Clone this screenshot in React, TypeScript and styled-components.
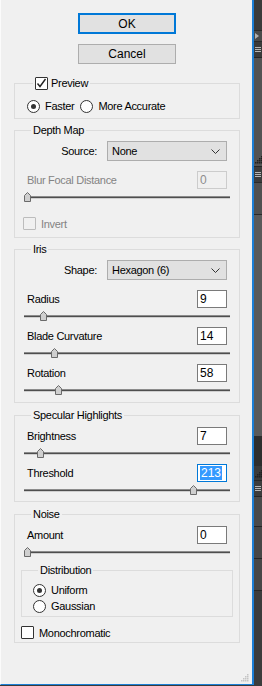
import React from 'react';
import styled, { createGlobalStyle } from 'styled-components';

const GlobalStyle = createGlobalStyle`
  html, body {
    margin: 0;
    padding: 0;
    background: #3a3a3a;
  }
  body {
    font-family: "Liberation Sans", Arial, sans-serif;
    font-size: 11px;
    letter-spacing: -0.3px;
    color: #000;
  }
`;

const Screen = styled.div`
  display: flex;
  width: 262px;
  height: 686px;
  overflow: hidden;
`;

const Panel = styled.div`
  width: 254px;
  height: 685px;
  flex: none;
  box-sizing: border-box;
  background: #f0f0f0;
  border-left: 1px solid #fbfbfb;
  border-right: 2px solid #1c7fd6;
  border-bottom: 1px solid #1c7fd6;
  padding: 13px 0 0 13px;
  display: flex;
  flex-direction: column;
  position: relative;
`;

const Buttons = styled.div`
  width: 226px;
  display: flex;
  flex-direction: column;
  align-items: center;
  gap: 10px;
  margin-bottom: 8px;
`;

const Button = styled.div<{ $default?: boolean }>`
  width: 98px;
  height: ${({ $default }) => ($default ? '21px' : '20px')};
  box-sizing: border-box;
  background: #e1e1e1;
  border: ${({ $default }) => ($default ? '2px solid #0078d7' : '1px solid #adadad')};
  display: flex;
  align-items: center;
  justify-content: center;
  font-size: 12px;
  letter-spacing: 0;
`;

const Group = styled.fieldset<{ $pt?: number; $pb?: number; $mt?: number }>`
  margin: ${({ $mt }) => $mt ?? 4}px 0 0;
  width: 226px;
  min-width: 0;
  box-sizing: border-box;
  border: 1px solid #dcdcdc;
  padding: ${({ $pt }) => $pt ?? 4}px 12px ${({ $pb }) => $pb ?? 0}px;
  display: flex;
  flex-direction: column;
`;

const InnerGroup = styled(Group)`
  width: auto;
  margin: 0 -6px;
  padding-left: 11px;
  padding-right: 11px;
`;

const Legend = styled.legend<{ $ml?: number }>`
  margin-left: ${({ $ml }) => $ml ?? 4}px;
  padding: 0 2px;
  height: 14px;
  line-height: 14px;
  display: flex;
  align-items: center;
  gap: 3px;
`;

const OptionRow = styled.div<{ $mt?: number }>`
  display: flex;
  align-items: center;
  height: 16px;
  margin-top: ${({ $mt }) => $mt ?? 0}px;
`;

const Option = styled.label<{ $disabled?: boolean }>`
  display: flex;
  align-items: center;
  gap: 5px;
  margin-right: 6px;
  color: ${({ $disabled }) => ($disabled ? '#838383' : '#000')};
`;

const Box = styled.span<{ $disabled?: boolean }>`
  width: 13px;
  height: 13px;
  box-sizing: border-box;
  flex: none;
  border: 1px solid ${({ $disabled }) => ($disabled ? '#bcbcbc' : '#333')};
  background: ${({ $disabled }) => ($disabled ? '#f0f0f0' : '#fff')};
  border-radius: 1px;
  display: flex;
  align-items: center;
  justify-content: center;
`;

const Circle = styled.span`
  width: 13px;
  height: 13px;
  box-sizing: border-box;
  flex: none;
  border: 1px solid #333;
  border-radius: 50%;
  background: #fff;
  display: flex;
  align-items: center;
  justify-content: center;
`;

const Dot = styled.span`
  width: 5px;
  height: 5px;
  border-radius: 50%;
  background: #333;
`;

const SelectRow = styled.div<{ $mb?: number }>`
  display: flex;
  justify-content: flex-end;
  align-items: center;
  gap: 10px;
  height: 20px;
  margin-bottom: ${({ $mb }) => $mb ?? 10}px;
`;

const Select = styled.div`
  width: 120px;
  height: 20px;
  box-sizing: border-box;
  background: #e1e1e1;
  border: 1px solid #adadad;
  display: flex;
  align-items: center;
  justify-content: space-between;
  padding: 0 6px 0 4px;
`;

const FieldRow = styled.div<{ $disabled?: boolean }>`
  display: flex;
  justify-content: space-between;
  align-items: center;
  height: 18px;
  color: ${({ $disabled }) => ($disabled ? '#838383' : '#000')};
`;

const ValueBox = styled.div<{ $state?: 'disabled' | 'focused' }>`
  width: 30px;
  height: 18px;
  box-sizing: border-box;
  background: ${({ $state }) => ($state === 'disabled' ? '#f0f0f0' : '#fff')};
  border: 1px solid
    ${({ $state }) => ($state === 'disabled' ? '#cccccc' : $state === 'focused' ? '#0078d7' : '#7a7a7a')};
  color: ${({ $state }) => ($state === 'disabled' ? '#8d8d8d' : '#000')};
  display: flex;
  align-items: center;
  padding-left: 2px;
  font-size: 12px;
  letter-spacing: 0;
`;

const Selected = styled.span`
  background: #3399ff;
  color: #fff;
  padding: 0 1px;
  line-height: 14px;
`;

const Slider = styled.div`
  position: relative;
  height: 19px;
  margin: 0 -3px;
`;

const Track = styled.div`
  position: absolute;
  left: 0;
  right: 0;
  top: 7px;
  height: 3px;
  background: linear-gradient(#8c8c8c 0 1px, #4e4e4e 1px 2px, #cfcfcf 2px 3px);
`;

const ThumbSpot = styled.div`
  position: absolute;
  top: 3px;
  width: 7px;
  height: 10px;
  line-height: 0;
`;

const CheckRow = styled.div<{ $mt: number; $ml?: number }>`
  display: flex;
  margin-top: ${({ $mt }) => $mt}px;
  margin-left: ${({ $ml }) => $ml ?? 0}px;
  height: 13px;
`;

const Grip = styled.div`
  position: absolute;
  right: 3px;
  bottom: 2px;
  line-height: 0;
`;

const Dock = styled.div`
  flex: 1;
  display: flex;
  flex-direction: column;
  background: #2e2e2e;
`;

const DockBlock = styled.div<{ $h: number; $bg: string; $edge?: string }>`
  height: ${({ $h }) => $h}px;
  flex: none;
  background: ${({ $bg }) => $bg};
  border-top: 1px solid ${({ $edge }) => $edge ?? 'transparent'};
  box-sizing: border-box;
  display: flex;
  align-items: center;
  justify-content: flex-start;
  padding-left: 1px;
  line-height: 0;
`;

const Check = () => (
  <svg width="11" height="11" viewBox="0 0 11 11">
    <polyline points="1.5,5.5 4,8.5 9.5,1" fill="none" stroke="#222" strokeWidth="1.4" />
  </svg>
);

const Chevron = () => (
  <svg width="9" height="5" viewBox="0 0 9 5">
    <polyline points="0.5,0.5 4.5,4.5 8.5,0.5" fill="none" stroke="#333" strokeWidth="1" />
  </svg>
);

const ThumbIcon = () => (
  <svg width="7" height="10" viewBox="0 0 7 10">
    <path d="M3.5 0.5 L6.5 3.5 L6.5 9.5 L0.5 9.5 L0.5 3.5 Z" fill="#cfcfcf" stroke="#6a6a6a" />
  </svg>
);

const Lines = () => (
  <svg width="6" height="6" viewBox="0 0 6 6">
    <rect x="0" y="0" width="6" height="1" fill="#b5b5b5" />
    <rect x="0" y="2" width="6" height="1" fill="#b5b5b5" />
    <rect x="0" y="4" width="6" height="1" fill="#b5b5b5" />
  </svg>
);

const Dots = ({ color }: { color: string }) => (
  <svg width="8" height="8" viewBox="0 0 8 8">
    {[
      [6, 0],
      [4, 2],
      [6, 2],
      [2, 4],
      [4, 4],
      [6, 4],
      [0, 6],
      [2, 6],
      [4, 6],
      [6, 6],
    ].map(([x, y]) => (
      <rect key={`${x}-${y}`} x={x} y={y} width="1.5" height="1.5" fill={color} />
    ))}
  </svg>
);

type SliderFieldProps = {
  label: string;
  value: string;
  pos: number;
  state?: 'disabled' | 'focused';
};

const SliderField: React.FC<SliderFieldProps> = ({ label, value, pos, state }) => (
  <>
    <FieldRow $disabled={state === 'disabled'}>
      <span>{label}</span>
      <ValueBox $state={state}>{state === 'focused' ? <Selected>{value}</Selected> : value}</ValueBox>
    </FieldRow>
    <Slider>
      <Track />
      <ThumbSpot style={{ left: pos }}>
        <ThumbIcon />
      </ThumbSpot>
    </Slider>
  </>
);

export default function App() {
  return (
    <Screen>
      <GlobalStyle />
      <Panel>
        <Buttons>
          <Button $default>OK</Button>
          <Button>Cancel</Button>
        </Buttons>

        <Group $pt={8} $pb={4}>
          <Legend $ml={6}>
            <Box>
              <Check />
            </Box>
            Preview
          </Legend>
          <OptionRow>
            <Option>
              <Circle>
                <Dot />
              </Circle>
              Faster
            </Option>
            <Option>
              <Circle />
              More Accurate
            </Option>
          </OptionRow>
        </Group>

        <Group $pb={7}>
          <Legend>Depth Map</Legend>
          <SelectRow>
            <span>Source:</span>
            <Select>
              None
              <Chevron />
            </Select>
          </SelectRow>
          <SliderField label="Blur Focal Distance" value="0" pos={0} state="disabled" />
          <CheckRow $mt={9} $ml={-4}>
            <Option $disabled>
              <Box $disabled />
              Invert
            </Option>
          </CheckRow>
        </Group>

        <Group $pb={1}>
          <Legend>Iris</Legend>
          <SelectRow>
            <span>Shape:</span>
            <Select>
              Hexagon (6)
              <Chevron />
            </Select>
          </SelectRow>
          <SliderField label="Radius" value="9" pos={16} />
          <SliderField label="Blade Curvature" value="14" pos={27} />
          <SliderField label="Rotation" value="58" pos={31} />
        </Group>

        <Group $pt={5} $mt={5}>
          <Legend>Specular Highlights</Legend>
          <SliderField label="Brightness" value="7" pos={13} />
          <SliderField label="Threshold" value="213" pos={166} state="focused" />
        </Group>

        <Group $pt={5} $pb={3} $mt={5}>
          <Legend>Noise</Legend>
          <SliderField label="Amount" value="0" pos={0} />
          <InnerGroup $pt={5} $pb={2} $mt={0}>
            <Legend $ml={5}>Distribution</Legend>
            <OptionRow>
              <Option>
                <Circle>
                  <Dot />
                </Circle>
                Uniform
              </Option>
            </OptionRow>
            <OptionRow>
              <Option>
                <Circle />
                Gaussian
              </Option>
            </OptionRow>
          </InnerGroup>
          <CheckRow $mt={9} $ml={-6}>
            <Option>
              <Box />
              Monochromatic
            </Option>
          </CheckRow>
        </Group>

        <Grip>
          <Dots color="#c4c4c4" />
        </Grip>
      </Panel>

      <Dock>
        <DockBlock $h={30} $bg="#3b3b3b" />
        <DockBlock $h={11} $bg="#4a4a4a" $edge="#2a2a2a">
          <svg width="4" height="6" viewBox="0 0 4 6">
            <path d="M0 0 L4 3 L0 6 Z" fill="#b0b0b0" />
          </svg>
        </DockBlock>
        <DockBlock $h={16} $bg="#3a3a3a" $edge="#2a2a2a">
          <Lines />
        </DockBlock>
        <DockBlock $h={95} $bg="#535353" $edge="#262626" />
        <DockBlock $h={14} $bg="#535353">
          <Dots color="#1f1f1f" />
        </DockBlock>
        <DockBlock $h={16} $bg="#3c3c3c" $edge="#262626">
          <Lines />
        </DockBlock>
        <DockBlock $h={32} $bg="#505050" $edge="#2a2a2a" />
        <DockBlock $h={222} $bg="#5a5a5a" $edge="#2a2a2a" />
        <DockBlock $h={30} $bg="#2e2e2e" />
        <DockBlock $h={14} $bg="#3a3a3a">
          <Dots color="#1f1f1f" />
        </DockBlock>
        <DockBlock $h={16} $bg="#3c3c3c" $edge="#262626">
          <Lines />
        </DockBlock>
        <DockBlock $h={30} $bg="#4a4a4a" $edge="#262626" />
        <DockBlock $h={32} $bg="#474747" $edge="#262626" />
        <DockBlock $h={32} $bg="#474747" $edge="#262626" />
        <DockBlock $h={96} $bg="#3c3c3c" $edge="#262626" />
      </Dock>
    </Screen>
  );
}
